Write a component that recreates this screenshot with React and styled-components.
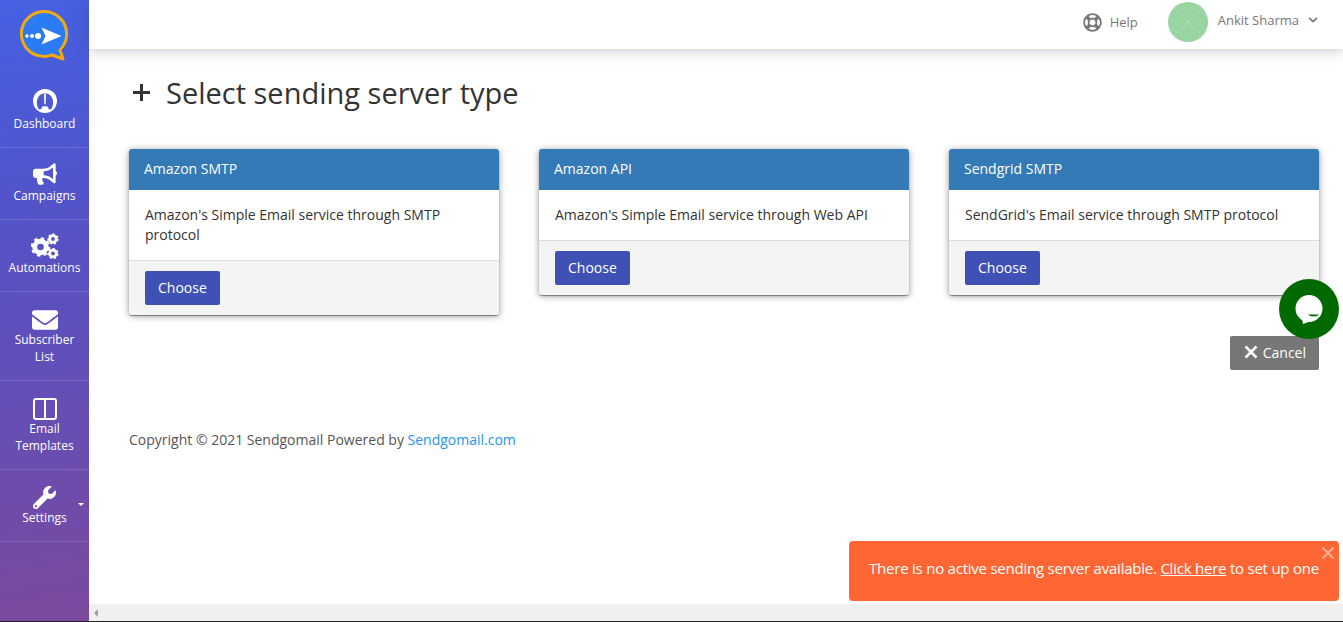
import React from 'react';
import styled, { createGlobalStyle } from 'styled-components';
import { FaBullhorn, FaEnvelope, FaWrench, FaRegLifeRing, FaChevronDown } from 'react-icons/fa';

const GlobalStyle = createGlobalStyle`
  html, body {
    margin: 0;
    height: 100%;
    overflow: hidden;
    background: #fff;
    font-family: "Open Sans", "Liberation Sans", sans-serif;
  }
  * { box-sizing: border-box; }
`;

const Page = styled.div`
  position: relative;
  display: flex;
  width: 1343px;
  height: 622px;
  overflow: hidden;
  border-bottom: 1px solid #222;
`;

const Sidebar = styled.nav`
  flex: 0 0 89px;
  display: flex;
  flex-direction: column;
  background: linear-gradient(170deg, #4561e3 0%, #5651c4 40%, #7b4a9e 100%);
`;

const LogoWrap = styled.div`
  height: 76px;
  padding: 10px 0 0 20px;
`;

const NavItem = styled.a`
  position: relative;
  display: flex;
  flex-direction: column;
  align-items: center;
  padding-top: 13px;
  height: ${({ $h }) => $h || 72}px;
  border-bottom: 1px solid rgba(255, 255, 255, 0.14);
  color: #fff;
  font-size: 12px;
  line-height: 17px;
  text-align: center;

  svg { display: block; }
`;

const IconSlot = styled.span`
  display: flex;
  align-items: center;
  justify-content: center;
  height: 26px;
  padding-top: ${({ $nudge }) => $nudge || 0}px;
  padding-bottom: ${({ $lift }) => $lift || 0}px;
`;

const Caret = styled.span`
  position: absolute;
  right: 5px;
  top: 33px;
  border-left: 3px solid transparent;
  border-right: 3px solid transparent;
  border-top: 3px solid #fff;
`;

const Main = styled.div`
  flex: 1;
  display: flex;
  flex-direction: column;
  min-width: 0;
`;

const TopBar = styled.header`
  flex: 0 0 49px;
  display: flex;
  align-items: flex-start;
  justify-content: flex-end;
  padding: 2px 25px 0 0;
  background: #fff;
  box-shadow: 0 0 14px rgba(60, 60, 90, 0.35);
  position: relative;
`;

const HelpLink = styled.a`
  display: flex;
  align-items: center;
  gap: 8px;
  margin: 10px 30px 0 0;
  color: #777;
  font-size: 13px;
  line-height: 20px;
`;

const Avatar = styled.span`
  display: block;
  width: 40px;
  height: 40px;
  border-radius: 50%;
  overflow: hidden;
  margin-right: 10px;
`;

const UserName = styled.span`
  display: flex;
  align-items: center;
  gap: 9px;
  margin-top: 9px;
  color: #777;
  font-size: 13px;
  line-height: 18px;
`;

const Content = styled.main`
  flex: 1;
  padding: 19px 24px 0 40px;
  background: #fff;
`;

const Heading = styled.h1`
  display: flex;
  align-items: center;
  gap: 14px;
  margin: 0 0 32px;
  height: 49px;
  font-size: 29px;
  line-height: 49px;
  font-weight: 400;
  color: #333;
`;

const PlusIcon = styled.svg`
  width: 21px;
  height: 21px;
  margin-left: 2px;
`;

const CardRow = styled.div`
  display: flex;
  align-items: flex-start;
  gap: 40px;
`;

const Card = styled.section`
  flex: 0 0 370px;
  border-radius: 3px;
  overflow: hidden;
  background: #fff;
  box-shadow: 0 1px 1px rgba(0, 0, 0, 0.4), 0 1px 7px rgba(0, 0, 0, 0.4);
`;

const CardHeader = styled.div`
  height: 41px;
  padding: 10px 15px;
  background: #337ab7;
  color: #fff;
  font-size: 14px;
  line-height: 20px;
`;

const CardBody = styled.div`
  padding: 15px 16px;
  color: #333;
  font-size: 14px;
  line-height: 20px;
`;

const CardFooter = styled.div`
  padding: 10px 16px;
  background: #f4f4f4;
  border-top: 1px solid #ddd;
`;

const ChooseButton = styled.button`
  display: block;
  height: 34px;
  padding: 0 13px 2px;
  border: 0;
  border-radius: 2px;
  background: #3f51b5;
  color: #fff;
  font: inherit;
  font-size: 14px;
`;

const ActionRow = styled.div`
  display: flex;
  justify-content: flex-end;
  margin-top: 21px;
`;

const CancelButton = styled.button`
  display: flex;
  align-items: center;
  gap: 5px;
  height: 34px;
  padding: 0 13px 2px 14px;
  border: 0;
  border-radius: 2px;
  background: #777;
  color: #fff;
  font: inherit;
  font-size: 14px;
`;

const Copyright = styled.p`
  margin: 60px 0 0;
  color: #555;
  font-size: 14px;
  line-height: 20px;
`;

const FooterLink = styled.a`
  color: #2196f3;
`;

const ScrollTrack = styled.div`
  flex: 0 0 17px;
  display: flex;
  align-items: center;
  padding-left: 5px;
  background: #f0f0f0;
`;

const ScrollArrow = styled.span`
  border-top: 4px solid transparent;
  border-bottom: 4px solid transparent;
  border-right: 4px solid #a3a3a3;
`;

const ChatBubble = styled.div`
  position: absolute;
  left: 1279px;
  top: 279px;
  width: 60px;
  height: 60px;
  display: flex;
  align-items: center;
  justify-content: center;
  padding-top: 2px;
  border-radius: 50%;
  background: #006a00;
`;

const Toast = styled.div`
  position: absolute;
  left: 849px;
  top: 541px;
  width: 490px;
  height: 60px;
  padding: 17px 20px 0;
  border-radius: 4px;
  background: #ff6633;
  color: #fff;
  font-size: 15px;
  line-height: 20px;
  letter-spacing: -0.23px;
  white-space: nowrap;
  text-align: center;
`;

const ToastLink = styled.a`
  text-decoration: underline;
`;

const ToastClose = styled.span`
  position: absolute;
  right: 4px;
  top: 5px;
  display: flex;
  color: rgba(255, 255, 255, 0.5);
`;

const Logo = () => (
  <svg width="50" height="52" viewBox="0 0 50 52">
    <path d="M24 1.500a22.500 22.500 0 1 0 8 43.500l11 4-3-9A22.500 22.500 0 0 0 24 1.500z" fill="#26264a" transform="translate(1 1.500)" />
    <path d="M24 1.500a22.500 22.500 0 1 0 8 43.500l11 4-3-9A22.500 22.500 0 0 0 24 1.500z" fill="#2b7bf5" stroke="#f2a90f" strokeWidth="3" strokeLinejoin="round" />
    <path d="M21.500 17.500l20 8.500-20 8.500 4-8.500z" fill="#fff" />
    <circle cx="7" cy="26" r="1.700" fill="#fff" />
    <circle cx="12" cy="26" r="2" fill="#fff" />
    <circle cx="18" cy="26" r="3" fill="#fff" />
  </svg>
);

const DashIcon = () => (
  <svg width="24" height="24" viewBox="0 0 25 25">
    <circle cx="12.500" cy="12.500" r="12.500" fill="#fff" />
    <path d="M6 21C2 15 4 5 12.500 4.500C21 5 23 15 19 21h-2.500c-.5-1-1-3-2.500-3h-3c-1.500 0-2 2-2.500 3z" fill="#4f58cf" />
    <path d="M11.500 5h2l-.3 11h-1.400z" fill="#fff" />
  </svg>
);

const Gear = ({ cx, cy, r, teeth }) => {
  const outer = r + r * 0.42;
  const dash = (2 * Math.PI * outer) / teeth / 2;
  return (
    <g fill="none" stroke="#fff">
      <circle cx={cx} cy={cy} r={r} strokeWidth={r * 0.85} />
      <circle cx={cx} cy={cy} r={outer} strokeWidth={r * 0.55} strokeDasharray={`${dash} ${dash}`} />
    </g>
  );
};

const CogsIcon = () => (
  <svg width="28" height="26" viewBox="0 0 28 26">
    <Gear cx={9.500} cy={14} r={5.800} teeth={8} />
    <Gear cx={22} cy={6} r={3.300} teeth={7} />
    <Gear cx={22} cy={20.500} r={3.300} teeth={7} />
  </svg>
);

const ColumnsIcon = () => (
  <svg width="24" height="22" viewBox="0 0 24 22">
    <rect x="1" y="1" width="22" height="20" rx="2" fill="none" stroke="#fff" strokeWidth="2" />
    <path d="M12 1v20" stroke="#fff" strokeWidth="2" />
  </svg>
);

const AvatarImage = () => (
  <svg width="40" height="40" viewBox="0 0 40 40">
    <rect width="40" height="40" fill="#98d5a2" />
    <path d="M0 0l40 40M40 0L0 40" stroke="#aadfb2" strokeWidth="1" />
  </svg>
);

const ChatIcon = () => (
  <svg width="28" height="30" viewBox="0 0 28 30">
    <circle cx="14" cy="13.500" r="13.500" fill="#fff" />
    <path d="M7 23l1 6 7-2.500z" fill="#fff" />
    <path d="M13 19.500h11c-1.200 1.300-3 2-5.500 2s-4.300-.7-5.500-2z" fill="#006a00" />
  </svg>
);

const CrossIcon = ({ size, width }) => (
  <svg width={size} height={size} viewBox="0 0 14 14">
    <path d="M1.500 1.500l11 11M12.500 1.500l-11 11" stroke="currentColor" strokeWidth={width} />
  </svg>
);

const navItems = [
  { label: ['Dashboard'], icon: <DashIcon />, lift: 2 },
  { label: ['Campaigns'], icon: <FaBullhorn size={24} /> },
  { label: ['Automations'], icon: <CogsIcon /> },
  { label: ['Subscriber', 'List'], icon: <FaEnvelope size={26} />, h: 89, nudge: 4 },
  { label: ['Email', 'Templates'], icon: <ColumnsIcon />, h: 89, nudge: 4 },
  { label: ['Settings'], icon: <FaWrench size={23} />, caret: true, nudge: 2 },
];

const cards = [
  { title: 'Amazon SMTP', text: "Amazon's Simple Email service through SMTP protocol" },
  { title: 'Amazon API', text: "Amazon's Simple Email service through Web API" },
  { title: 'Sendgrid SMTP', text: "SendGrid's Email service through SMTP protocol" },
];

export default function App() {
  return (
    <>
      <GlobalStyle />
      <Page>
        <Sidebar>
          <LogoWrap><Logo /></LogoWrap>
          {navItems.map((item) => (
            <NavItem key={item.label[0]} $h={item.h}>
              <IconSlot $nudge={item.nudge} $lift={item.lift}>{item.icon}</IconSlot>
              {item.label.map((line) => <span key={line}>{line}</span>)}
              {item.caret && <Caret />}
            </NavItem>
          ))}
        </Sidebar>
        <Main>
          <TopBar>
            <HelpLink><FaRegLifeRing size={19} />Help</HelpLink>
            <Avatar><AvatarImage /></Avatar>
            <UserName>Ankit Sharma <FaChevronDown size={10} /></UserName>
          </TopBar>
          <Content>
            <Heading>
              <PlusIcon viewBox="0 0 21 21"><path d="M10.500 2v17M2 10.500h17" stroke="#333" strokeWidth="3" /></PlusIcon>
              Select sending server type
            </Heading>
            <CardRow>
              {cards.map((card) => (
                <Card key={card.title}>
                  <CardHeader>{card.title}</CardHeader>
                  <CardBody>{card.text}</CardBody>
                  <CardFooter><ChooseButton>Choose</ChooseButton></CardFooter>
                </Card>
              ))}
            </CardRow>
            <ActionRow>
              <CancelButton><CrossIcon size={14} width={2.500} />Cancel</CancelButton>
            </ActionRow>
            <Copyright>Copyright © 2021 Sendgomail Powered by <FooterLink>Sendgomail.com</FooterLink></Copyright>
          </Content>
          <ScrollTrack><ScrollArrow /></ScrollTrack>
        </Main>
        <ChatBubble><ChatIcon /></ChatBubble>
        <Toast>
          There is no active sending server available. <ToastLink>Click here</ToastLink> to set up one
          <ToastClose><CrossIcon size={14} width={2} /></ToastClose>
        </Toast>
      </Page>
    </>
  );
}
